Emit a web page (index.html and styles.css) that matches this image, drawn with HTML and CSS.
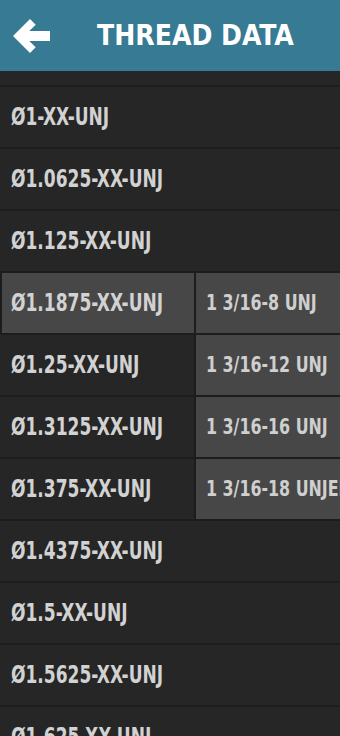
FILE: index.html
```html
<!DOCTYPE html>
<html lang="en">
<head>
  <meta charset="UTF-8">
  <title>Thread Data</title>
  <link rel="stylesheet" href="styles.css">
</head>
<body>

<header class="topbar">
  <svg class="back" width="40" height="40" viewBox="0 0 40 40">
    <polygon points="2,20 19,3 24.7,8.7 18.3,15 39,15 39,25 18.3,25 24.7,31.3 19,37" fill="#fff"/>
  </svg>
  <h1>THREAD DATA</h1>
</header>

<div class="list">
  <div class="row partial"><div class="cell"></div></div>
  <div class="row"><div class="cell"><span>Ø1-XX-UNJ</span></div></div>
  <div class="row"><div class="cell"><span>Ø1.0625-XX-UNJ</span></div></div>
  <div class="row"><div class="cell"><span>Ø1.125-XX-UNJ</span></div></div>
  <div class="row">
    <div class="cell main active"><span>Ø1.1875-XX-UNJ</span></div>
    <div class="cell sub"><span>1 3/16-8 UNJ</span></div>
  </div>
  <div class="row">
    <div class="cell main"><span>Ø1.25-XX-UNJ</span></div>
    <div class="cell sub"><span>1 3/16-12 UNJ</span></div>
  </div>
  <div class="row">
    <div class="cell main"><span>Ø1.3125-XX-UNJ</span></div>
    <div class="cell sub"><span>1 3/16-16 UNJ</span></div>
  </div>
  <div class="row">
    <div class="cell main"><span>Ø1.375-XX-UNJ</span></div>
    <div class="cell sub"><span>1 3/16-18 UNJEF</span></div>
  </div>
  <div class="row"><div class="cell"><span>Ø1.4375-XX-UNJ</span></div></div>
  <div class="row"><div class="cell"><span>Ø1.5-XX-UNJ</span></div></div>
  <div class="row"><div class="cell"><span>Ø1.5625-XX-UNJ</span></div></div>
  <div class="row"><div class="cell"><span>Ø1.625-XX-UNJ</span></div></div>
</div>

</body>
</html>
```

FILE: styles.css
```css
* { box-sizing: border-box; }
body { margin: 0; padding: 0; background-color: #1d1d1d; font-family: "DejaVu Sans Condensed", "DejaVu Sans", sans-serif; overflow: hidden; }
.topbar { display: flex; align-items: center; height: 71px; background-color: #367a93; padding-left: 11px; }
.back { flex: none; margin-top: 1px; }
.topbar h1 { margin: 0 0 0 46px; font-weight: bold; font-size: 28px; color: #fff; }
.list { display: flex; flex-direction: column; gap: 2px; }
.row { display: flex; gap: 2px; }
.row.partial .cell { height: 14px; }
.cell { flex: 1; height: 60px; display: flex; align-items: center; background-color: #262626; color: #d2d2d2; font-weight: bold; font-size: 24px; padding-left: 11px; white-space: nowrap; overflow: hidden; }
.cell span { display: inline-block; transform: scaleX(0.79); transform-origin: left center; }
.cell.main { flex: none; width: 194px; }
.cell.sub { background-color: #474747; font-size: 21px; padding-left: 10px; color: #cfcfcf; }
.cell.sub span { transform: scaleX(0.84); }
.cell.active { background-color: #474747; margin-left: 2px; width: 192px; padding-left: 9px; }
```
